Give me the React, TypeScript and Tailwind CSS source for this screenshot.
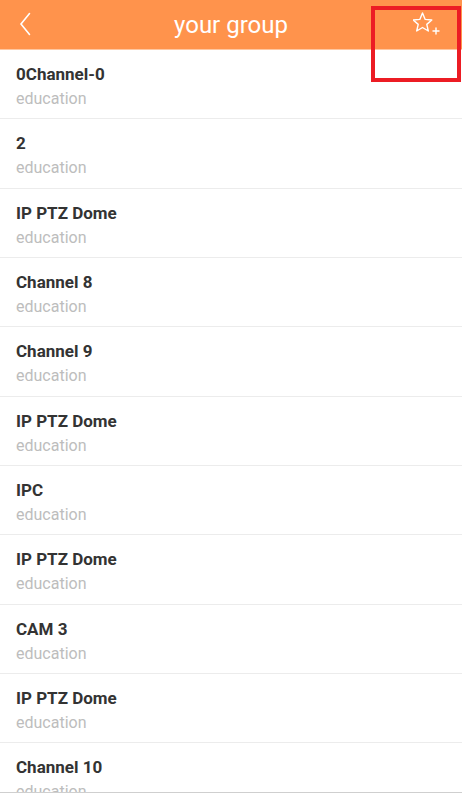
import React from 'react';

interface Channel {
    name: string;
    group: string;
}

const channels: Channel[] = [
    {name: '0Channel-0', group: 'education'},
    {name: '2', group: 'education'},
    {name: 'IP PTZ Dome', group: 'education'},
    {name: 'Channel 8', group: 'education'},
    {name: 'Channel 9', group: 'education'},
    {name: 'IP PTZ Dome', group: 'education'},
    {name: 'IPC', group: 'education'},
    {name: 'IP PTZ Dome', group: 'education'},
    {name: 'CAM 3', group: 'education'},
    {name: 'IP PTZ Dome', group: 'education'},
    {name: 'Channel 10', group: 'education'},
];

const StarPlus = () => (
    <svg width="28" height="24" viewBox="0 0 28 24" fill="none" stroke="white" strokeWidth="1.4" strokeLinejoin="round">
        <path d="M9.5 1 L12.2 7.4 L18.8 8 L13.8 12.4 L15.3 19 L9.5 15.5 L3.7 19 L5.2 12.4 L0.2 8 L6.8 7.4 Z"/>
        <path d="M20 19 H26 M23 16 V22" strokeLinecap="round"/>
    </svg>
);

const App: React.FC = () => {
    return (
        <div className="relative flex h-[794px] w-[462px] flex-col overflow-hidden bg-white font-['Roboto',sans-serif]">
            {/* header */}
            <div className="relative flex h-[50px] shrink-0 items-center justify-center border-b border-[#ffc7a1] bg-[#ff934c]">
                <button className="absolute left-[19px] top-[12px]">
                    <svg width="12" height="24" viewBox="0 0 12 24" fill="none" stroke="white" strokeWidth="1.6" strokeLinecap="round">
                        <path d="M10.5 1.5 L2 12 L10.5 22.5"/>
                    </svg>
                </button>
                <h1 className="text-[24px] leading-none text-white">your group</h1>
                <button className="absolute left-[413px] top-[12px]">
                    <StarPlus/>
                </button>
            </div>

            <div className="flex-1 overflow-hidden border-b border-[#cfcfcf]">
                {channels.map((ch, i) => (
                    <div key={i} className="h-[69.33px] border-b border-[#ececec] px-4 pt-[14px]">
                        <div className="text-[17px] font-bold leading-5 text-[#333333]">{ch.name}</div>
                        <div className="mt-[5px] text-[16px] leading-5 text-[#bdbdbd]">{ch.group}</div>
                    </div>
                ))}
            </div>
            <div className="h-px shrink-0 bg-white"/>

            {/* annotation box */}
            <div className="pointer-events-none absolute left-[371px] top-[6px] h-[76px] w-[90px] border-[4px] border-[#ec1c24]"/>
        </div>
    );
};

export default App;
